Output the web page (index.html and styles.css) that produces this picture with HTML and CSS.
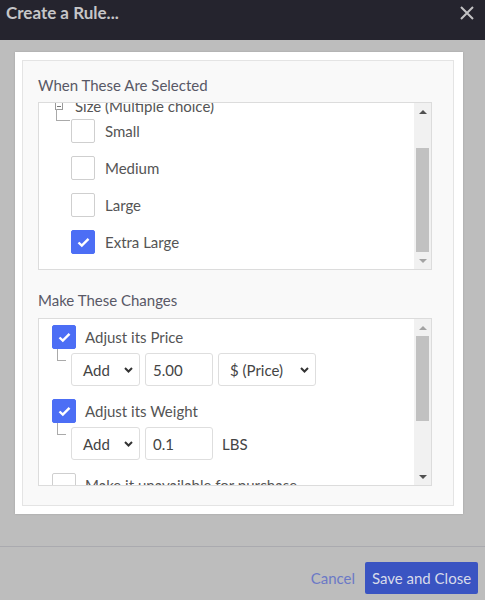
FILE: index.html
```html
<!DOCTYPE html>
<html>
<head>
<meta charset="utf-8">
<link rel="stylesheet" href="styles.css">
</head>
<body>
<div class="titlebar">
  <div class="title">Create a Rule...</div>
  <svg class="close" width="14" height="14" viewBox="0 0 14 14"><path d="M1 1L13 13M13 1L1 13" stroke="#c2c2c4" stroke-width="2" fill="none"/></svg>
</div>
<div class="stage">
  <div class="card">
    <div class="inner">
      <div class="heading">When These Are Selected</div>
      <div class="listbox">
        <div class="clip">
          <div class="group-row">
            <span class="minus"></span>
            <span class="group-label">Size (Multiple choice)</span>
          </div>
          <div class="opt first">
            <span class="tree-line"></span>
            <span class="cb"></span><span class="lbl">Small</span>
          </div>
          <div class="opt"><span class="cb"></span><span class="lbl">Medium</span></div>
          <div class="opt"><span class="cb"></span><span class="lbl">Large</span></div>
          <div class="opt"><span class="cb on"><svg width="13" height="11" viewBox="0 0 13 11"><path d="M1.5 5.5L4.8 8.6L11.5 1.8" stroke="#fff" stroke-width="2.4" fill="none"/></svg></span><span class="lbl">Extra Large</span></div>
        </div>
        <div class="scrollbar">
          <div class="sb-btn"><span class="arr-up dark"></span></div>
          <div class="sb-track end"><div class="thumb t1"></div></div>
          <div class="sb-btn"><span class="arr-down light"></span></div>
        </div>
      </div>

      <div class="heading second">Make These Changes</div>
      <div class="listbox">
        <div class="clip changes">
          <div class="chg">
            <span class="cb on"><svg width="13" height="11" viewBox="0 0 13 11"><path d="M1.5 5.5L4.8 8.6L11.5 1.8" stroke="#fff" stroke-width="2.4" fill="none"/></svg></span><span class="lbl2">Adjust its Price</span>
          </div>
          <div class="sub">
            <span class="tree-line2"></span>
            <div class="sel w-add"><span>Add</span><svg width="9" height="6" viewBox="0 0 9 6"><path d="M1 1L4.5 4.5L8 1" stroke="#333" stroke-width="2" fill="none"/></svg></div>
            <div class="inp">5.00</div>
            <div class="sel w-unit"><span>$ (Price)</span><svg width="9" height="6" viewBox="0 0 9 6"><path d="M1 1L4.5 4.5L8 1" stroke="#333" stroke-width="2" fill="none"/></svg></div>
          </div>
          <div class="chg gap">
            <span class="cb on"><svg width="13" height="11" viewBox="0 0 13 11"><path d="M1.5 5.5L4.8 8.6L11.5 1.8" stroke="#fff" stroke-width="2.4" fill="none"/></svg></span><span class="lbl2">Adjust its Weight</span>
          </div>
          <div class="sub">
            <span class="tree-line2"></span>
            <div class="sel w-add"><span>Add</span><svg width="9" height="6" viewBox="0 0 9 6"><path d="M1 1L4.5 4.5L8 1" stroke="#333" stroke-width="2" fill="none"/></svg></div>
            <div class="inp">0.1</div>
            <span class="unit">LBS</span>
          </div>
          <div class="chg gap">
            <span class="cb"></span><span class="lbl2">Make it unavailable for purchase</span>
          </div>
        </div>
        <div class="scrollbar">
          <div class="sb-btn"><span class="arr-up light"></span></div>
          <div class="sb-track"><div class="thumb t2"></div></div>
          <div class="sb-btn"><span class="arr-down dark"></span></div>
        </div>
      </div>
    </div>
  </div>
</div>
<div class="footer">
  <span class="cancel">Cancel</span>
  <button class="save">Save and Close</button>
</div>
</body>
</html>
```
FILE: styles.css
```css
* { box-sizing: border-box; }
html, body { margin: 0; padding: 0; }
body {
  width: 485px;
  height: 600px;
  overflow: hidden;
  font-family: Lato, "Open Sans", sans-serif;
  font-size: 15px;
  color: #555;
  background: #bdbdbd;
}
.titlebar {
  height: 40px;
  background: #25242e;
  display: flex;
  justify-content: space-between;
  align-items: flex-start;
  padding: 3px 11px 0 6px;
}
.title {
  font-weight: bold;
  font-size: 17px;
  line-height: 20px;
  color: #c6c6c8;
}
.close { margin-top: 3px; }
.stage {
  height: 506px;
  padding: 12px 0 0 15px;
}
.card {
  width: 448px;
  height: 462px;
  background: #fff;
  padding: 8px 9px 8px 7px;
  box-shadow: 0 0 2px rgba(0,0,0,0.15);
}
.inner {
  height: 100%;
  background: #f9f9f9;
  border: 1px solid #e4e4e4;
  padding: 14px 0 0 15px;
}
.heading {
  line-height: 20px;
  height: 20px;
  color: #585866;
  margin-bottom: 7px;
}
.heading.second { margin-top: 20px; margin-bottom: 8px; }
.listbox {
  width: 394px;
  height: 168px;
  border: 1px solid #dcdcdc;
  background: #fff;
  display: flex;
}
.clip {
  flex: 1;
  overflow: hidden;
}
.group-row {
  height: 20px;
  margin-top: -7px;
  display: flex;
  align-items: center;
  padding-left: 16px;
}
.minus {
  width: 8px;
  height: 8px;
  border: 1px solid #9a9a9a;
  margin-right: 12px;
  display: flex;
  align-items: center;
  justify-content: center;
}
.minus::after {
  content: "";
  width: 4px;
  height: 1px;
  background: #777;
}
.group-label { color: #555; line-height: 20px; }
.opt {
  height: 24px;
  margin-top: 13px;
  display: flex;
  align-items: center;
  padding-left: 32px;
}
.opt.first { margin-top: 3px; padding-left: 17px; }
.tree-line {
  width: 14px;
  height: 12px;
  margin-top: -10px;
  margin-right: 1px;
  align-self: flex-start;
  border-left: 1px solid #aaa;
  border-bottom: 1px solid #aaa;
}
.cb {
  width: 24px;
  height: 24px;
  border: 1px solid #cfcfcf;
  border-radius: 2px;
  background: #fff;
  flex-shrink: 0;
  display: flex;
  align-items: center;
  justify-content: center;
}
.cb.on { background: #4c6ef5; border-color: #4c6ef5; }
.lbl { margin-left: 10px; line-height: 20px; }
.changes { padding-top: 6px; }
.chg {
  height: 24px;
  display: flex;
  align-items: center;
  padding-left: 13px;
}
.chg.gap { margin-top: 13px; }
.lbl2 { margin-left: 9px; line-height: 20px; white-space: nowrap; }
.sub {
  height: 33px;
  margin-top: 4px;
  display: flex;
  align-items: center;
  padding-left: 18px;
}
.tree-line2 {
  width: 9px;
  height: 12px;
  margin-top: -4px;
  margin-right: 5px;
  align-self: flex-start;
  border-left: 1px solid #aaa;
  border-bottom: 1px solid #aaa;
}
.sel, .inp {
  height: 33px;
  border: 1px solid #dedede;
  border-radius: 3px;
  background: #fff;
  display: flex;
  align-items: center;
  color: #444;
}
.sel { justify-content: space-between; padding: 0 6px 0 11px; }
.w-add { width: 69px; }
.w-unit { width: 98px; }
.inp { width: 68px; padding-left: 7px; margin: 0 5px; }
.unit { margin-left: 4px; color: #444; }
.scrollbar {
  width: 17px;
  background: #f1f1f1;
  display: flex;
  flex-direction: column;
}
.sb-btn {
  height: 17px;
  display: flex;
  align-items: center;
  justify-content: center;
}
.arr-up, .arr-down {
  width: 0;
  height: 0;
  border-left: 4px solid transparent;
  border-right: 4px solid transparent;
}
.arr-up.dark { border-bottom: 4px solid #505050; }
.arr-up.light { border-bottom: 4px solid #a3a3a3; }
.arr-down.dark { border-top: 4px solid #505050; }
.arr-down.light { border-top: 4px solid #a3a3a3; }
.sb-track {
  flex: 1;
  display: flex;
  flex-direction: column;
  padding: 0 2px;
}
.sb-track.end { justify-content: flex-end; }
.thumb { background: #c1c1c1; }
.t1 { height: 104px; }
.t2 { height: 85px; }
.footer {
  height: 54px;
  border-top: 1px solid #aaaaaf;
  display: flex;
  justify-content: flex-end;
  align-items: flex-start;
  padding: 15px 7px 0 0;
}
.cancel {
  color: #6b79c6;
  line-height: 32px;
  margin-right: 10px;
}
.save {
  height: 32px;
  width: 113px;
  border: none;
  border-radius: 2px;
  background: #3a54c2;
  color: #d8dbea;
  font-family: Lato, "Open Sans", sans-serif;
  font-size: 15px;
  padding: 0;
}
```
